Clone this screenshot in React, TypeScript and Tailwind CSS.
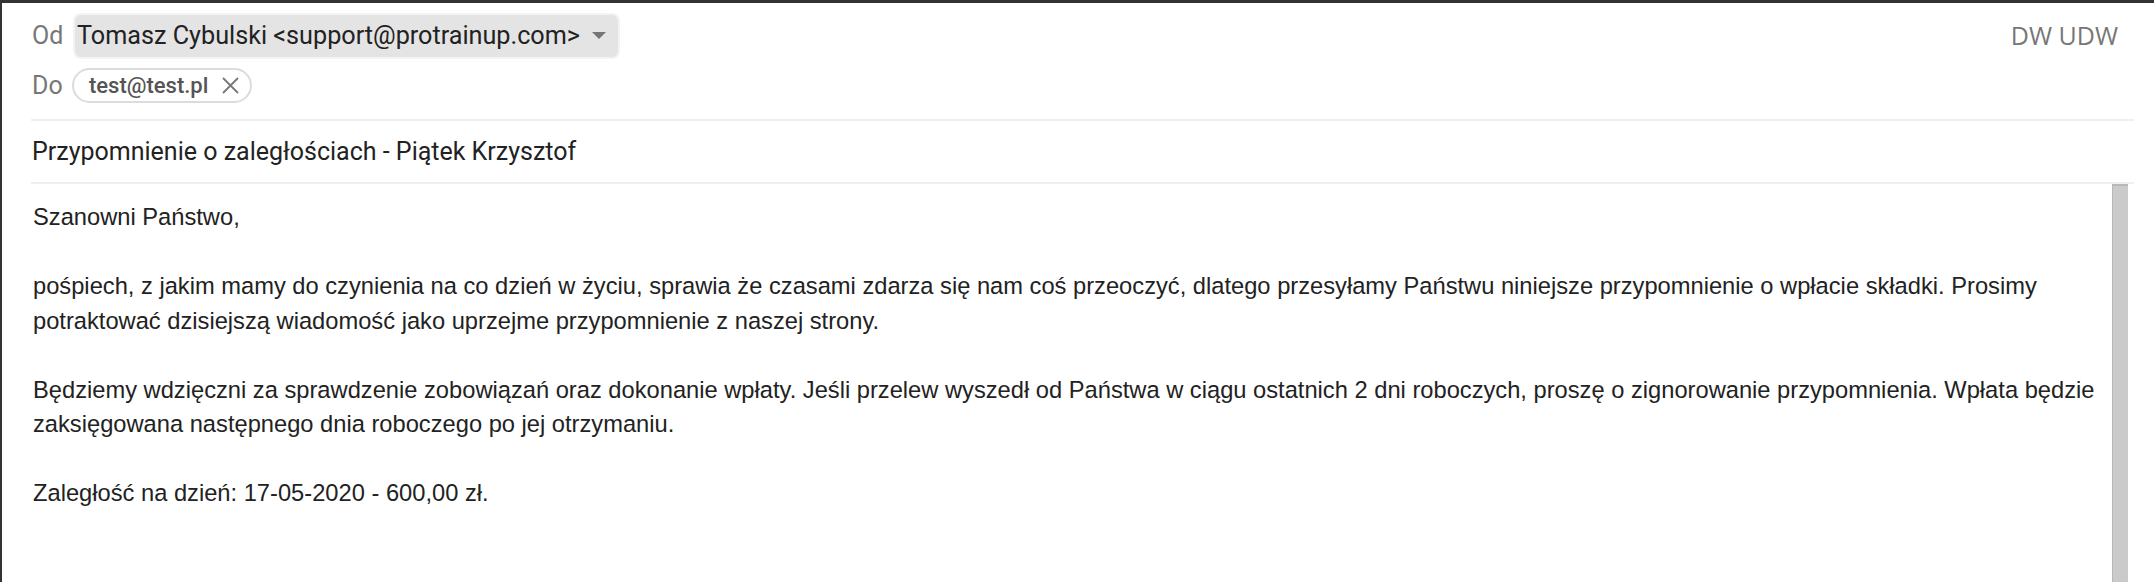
const lines = [
  "Szanowni Państwo,",
  "",
  "pośpiech, z jakim mamy do czynienia na co dzień w życiu, sprawia że czasami zdarza się nam coś przeoczyć, dlatego przesyłamy Państwu niniejsze przypomnienie o wpłacie składki. Prosimy",
  "potraktować dzisiejszą wiadomość jako uprzejme przypomnienie z naszej strony.",
  "",
  "Będziemy wdzięczni za sprawdzenie zobowiązań oraz dokonanie wpłaty. Jeśli przelew wyszedł od Państwa w ciągu ostatnich 2 dni roboczych, proszę o zignorowanie przypomnienia. Wpłata będzie",
  "zaksięgowana następnego dnia roboczego po jej otrzymaniu.",
  "",
  "Zaległość na dzień: 17-05-2020 - 600,00 zł.",
];

const App = () => {
  return (
    <div className="h-[582px] w-full overflow-hidden border-l-[2px] border-t-[3px] border-[#333333] bg-white">
      <div className="ml-[29px] mr-[20px] font-['Roboto',sans-serif]">
        {/* from / to */}
        <div className="flex flex-col gap-[9px] pb-[16px] pt-[10px]">
          <div className="flex h-[46px] items-center">
            <span className="w-[42px] pl-[1px] text-[25px] text-[#777777]">Od</span>
            <div className="flex h-[46px] items-center gap-[12px] rounded-[8px] border-2 border-[#f3f3f3] bg-[#e4e4e4] pl-[2px] pr-[12px]">
              <span className="text-[25.2px] text-[#222222]">
                Tomasz Cybulski &lt;support@protrainup.com&gt;
              </span>
              <svg width="14" height="8" viewBox="0 0 14 8">
                <path d="M0 0 L14 0 L7 7 Z" fill="#757575" />
              </svg>
            </div>
            <span className="ml-auto pr-[16px] font-['Open_Sans',sans-serif] text-[25px] text-[#777777]">
              DW UDW
            </span>
          </div>
          <div className="flex h-[35px] items-center">
            <span className="w-[41px] pl-[1px] text-[25px] text-[#777777]">Do</span>
            <div className="flex h-[35px] items-center gap-[14px] rounded-full border-2 border-[#dcdcdc] pl-[15px] pr-[11px]">
              <span className="text-[22px] font-medium text-[#555555]">test@test.pl</span>
              <svg width="17" height="17" viewBox="0 0 17 17">
                <path d="M1 1 L16 16 M16 1 L1 16" stroke="#777777" strokeWidth="1.8" />
              </svg>
            </div>
          </div>
        </div>
        <div className="h-[2px] bg-[#efefef]" />

        {/* subject */}
        <div className="flex h-[61px] items-center pl-[1px] text-[25px] text-[#222222]">
          Przypomnienie o zaległościach - Piątek Krzysztof
        </div>
        <div className="h-[2px] bg-[#efefef]" />
      </div>

      {/* body */}
      <div className="ml-[29px] mr-[26px] flex h-[400px]">
        <div className="min-w-0 flex-1 overflow-hidden pl-[2px] pt-[16px] font-['Liberation_Sans',Arial,sans-serif] text-[23.7px] leading-[34.5px] text-[#222222]">
          {lines.map((l, i) =>
            l === "" ? (
              <div key={i} className="h-[34.5px]" />
            ) : (
              <div key={i} className="whitespace-nowrap">
                {l}
              </div>
            ),
          )}
        </div>
        <div className="w-[16px] shrink-0 border-l border-t-2 border-[#b8b8b8] bg-[#cacaca]" />
      </div>
    </div>
  );
};

export default App;
